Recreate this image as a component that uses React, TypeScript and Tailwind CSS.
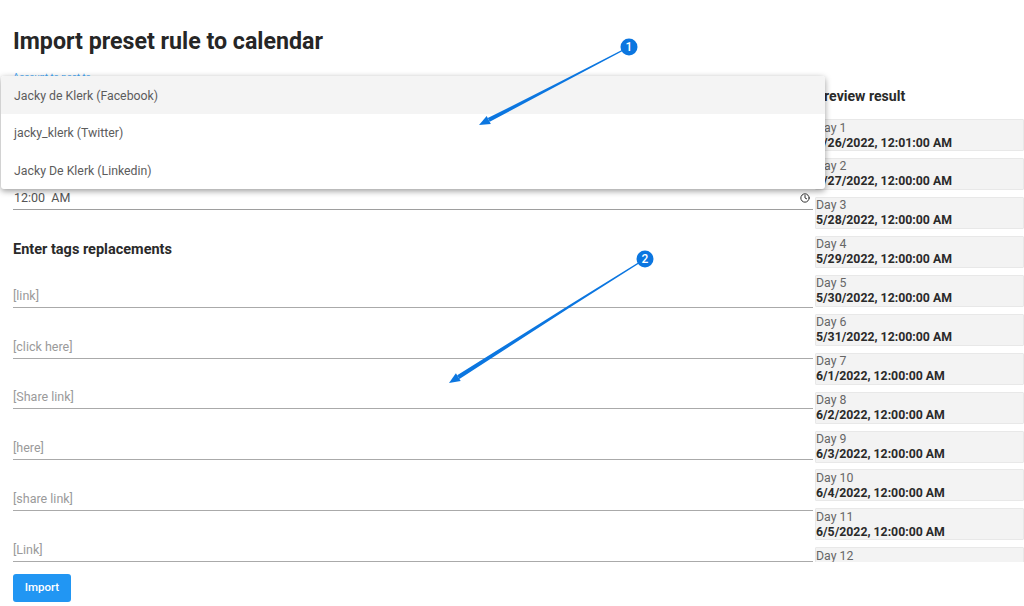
import { Clock } from "lucide-react";

const tags = ["[link]", "[click here]", "[Share link]", "[here]", "[share link]", "[Link]"];
const accounts = ["Jacky de Klerk (Facebook)", "jacky_klerk (Twitter)", "Jacky De Klerk (Linkedin)"];
const days = [
  "5/26/2022, 12:01:00 AM",
  "5/27/2022, 12:00:00 AM",
  "5/28/2022, 12:00:00 AM",
  "5/29/2022, 12:00:00 AM",
  "5/30/2022, 12:00:00 AM",
  "5/31/2022, 12:00:00 AM",
  "6/1/2022, 12:00:00 AM",
  "6/2/2022, 12:00:00 AM",
  "6/3/2022, 12:00:00 AM",
  "6/4/2022, 12:00:00 AM",
  "6/5/2022, 12:00:00 AM",
  "",
];

function Callout({ n, x, y, tipX, tipY, midX, midY }: { n: number; x: number; y: number; tipX: number; tipY: number; midX: number; midY: number }) {
  const dx = tipX - x;
  const dy = tipY - y;
  const len = Math.hypot(dx, dy);
  const ux = dx / len;
  const uy = dy / len;
  const nx = -uy;
  const ny = ux;
  const bx = tipX - ux * 11;
  const by = tipY - uy * 11;
  return (
    <>
      <polygon
        points={`${x + nx * 0.6},${y + ny * 0.6} ${midX + nx * 1.1},${midY + ny * 1.1} ${bx + nx * 2.1},${by + ny * 2.1} ${bx - nx * 2.1},${by - ny * 2.1} ${midX - nx * 1.1},${midY - ny * 1.1} ${x - nx * 0.6},${y - ny * 0.6}`}
        fill="#0b76e0"
      />
      <polygon points={`${tipX},${tipY} ${bx + nx * 4.5},${by + ny * 4.5} ${bx - nx * 4.5},${by - ny * 4.5}`} fill="#0b76e0" />
      <circle cx={x} cy={y} r={8.5} fill="#0b76e0" />
      <text x={x} y={y + 4.2} textAnchor="middle" fontSize={12} fontWeight={500} fill="#fff" fontFamily="Roboto, sans-serif">
        {n}
      </text>
    </>
  );
}

export default function App() {
  return (
    <div className="relative h-[606px] w-[1024px] overflow-hidden bg-white font-['Roboto',sans-serif] text-[#212121]">
      <div className="flex h-full">
        <div className="flex w-[815px] flex-col pl-[13px] pr-[2px]">
          <h1 className="mt-[26px] h-[30px] text-[23.2px] font-bold leading-[30px] text-[#262626]">Import preset rule to calendar</h1>
          <div className="mt-[15px] text-[9.5px] leading-[12px] text-[#42a5f5]">Account to post to</div>

          <div className="mt-[106px] flex h-[21px] items-center justify-between border-b border-[#9e9e9e] pb-[3px]">
            <span className="pl-[1px] text-[12.5px] leading-[16px] text-[#555]">12:00&nbsp; AM</span>
            <Clock className="mr-[3px] h-[10px] w-[10px] text-[#333]" strokeWidth={2.4} />
          </div>

          <h2 className="mt-[33px] text-[14.5px] font-bold leading-[14px] text-[#2a2a2a]">Enter tags replacements</h2>

          <div className="flex flex-col">
            {tags.map((t) => (
              <div key={t} className="flex h-[50.8px] items-end border-b border-[#aaa] pb-[3px] text-[12.5px] leading-[16px] text-[#9a9a9a]">
                {t}
              </div>
            ))}
          </div>

          <button type="button" className="mt-[12px] h-[28px] w-[58px] rounded-[3px] bg-[#2196f3] text-[11.5px] font-medium text-white">
            Import
          </button>
        </div>

        <div className="flex h-[562px] w-[209px] flex-col overflow-hidden">
          <h2 className="mt-[87px] h-[18px] text-[14.1px] font-bold leading-[18px] text-[#2a2a2a]">Preview result</h2>
          <div className="mt-[14px] flex flex-col gap-[6.95px]">
            {days.map((d, i) => (
              <div key={i} className="h-[32px] shrink-0 rounded-[1px] border border-[#e8e8e8] bg-[#f3f3f3] pt-[0.5px] text-[12.3px] leading-[15px]">
                <div className="text-[#666]">Day {i + 1}</div>
                {d && <div className="font-bold text-[#2a2a2a]">{d}</div>}
              </div>
            ))}
          </div>
        </div>
      </div>

      <div className="absolute left-[1px] top-[76px] w-[824px] overflow-hidden rounded-[3px] bg-white shadow-[0_2px_6px_rgba(0,0,0,0.4)]">
        {accounts.map((a, i) => (
          <div key={a} className={`flex h-[37.5px] items-center pl-[13px] pt-[2px] text-[12.3px] text-[#5c5c5c] ${i === 0 ? "bg-[#f4f4f4]" : ""}`}>
            {a}
          </div>
        ))}
      </div>

      <svg className="absolute left-0 top-0" width={1024} height={606}>
        <Callout n={1} x={629} y={47} tipX={479} tipY={125} midX={560} midY={83} />
        <Callout n={2} x={645} y={259} tipX={449} tipY={383} midX={570} midY={306} />
      </svg>
    </div>
  );
}
